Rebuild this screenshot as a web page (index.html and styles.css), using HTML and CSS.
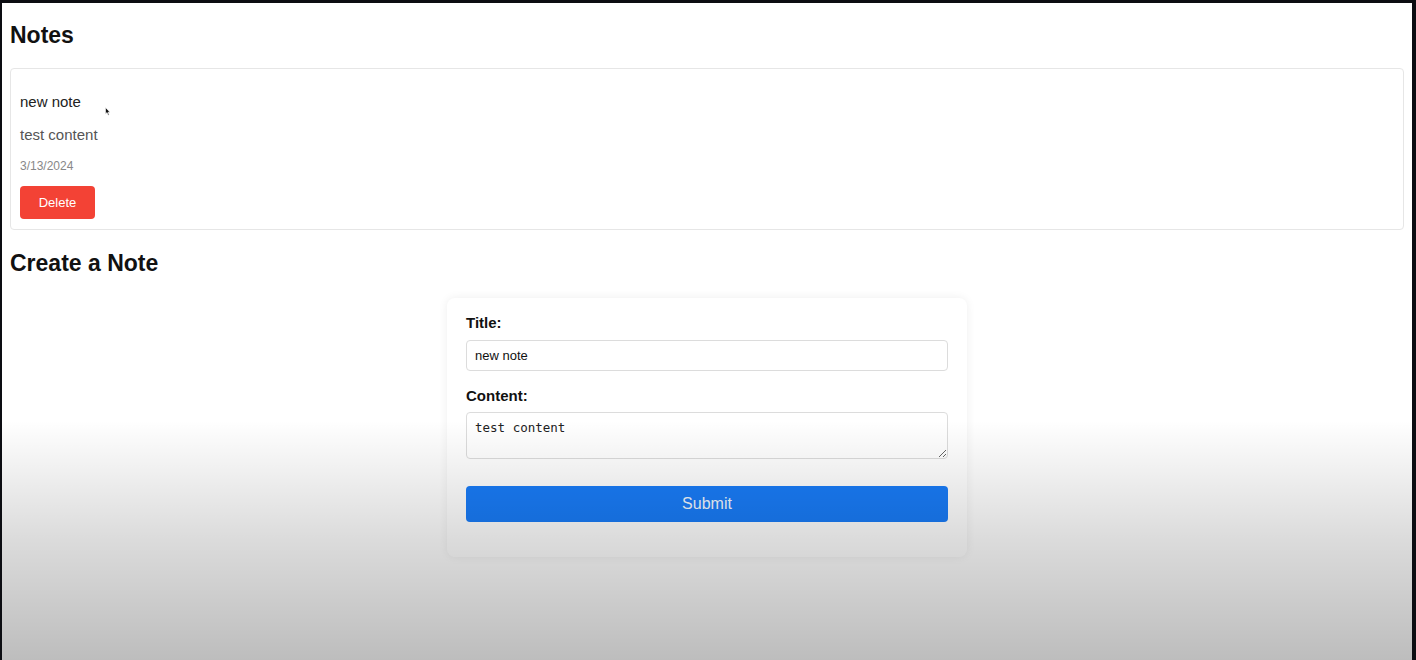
FILE: index.html
```html
<!DOCTYPE html>
<html lang="en">
<head>
<meta charset="utf-8">
<title>Notes</title>
<link rel="stylesheet" href="styles.css">
</head>
<body>
<div class="screen">
  <h2 class="heading heading-notes">Notes</h2>
  <div class="note-card">
    <p class="note-title">new note</p>
    <p class="note-content">test content</p>
    <p class="note-date">3/13/2024</p>
    <button class="btn-delete" type="button">Delete</button>
  </div>
  <h2 class="heading heading-create">Create a Note</h2>
  <form class="note-form">
    <label class="field-label" for="title">Title:</label>
    <input class="field-input" id="title" type="text" value="new note">
    <label class="field-label field-label-second" for="content">Content:</label>
    <textarea class="field-textarea" id="content">test content</textarea>
    <button class="btn-submit" type="button">Submit</button>
  </form>
  <svg class="cursor" width="6" height="9" viewBox="0 0 6 9"><path d="M0.5 0.5 L0.5 7 L2 5.6 L3.2 8.2 L4.2 7.8 L3 5.2 L5 5.2 Z" fill="#111" stroke="#fff" stroke-width="0.6"/></svg>
  <div class="fade"></div>
</div>
</body>
</html>
```

FILE: styles.css
```css
* { box-sizing: border-box; }
html, body { margin: 0; padding: 0; }
body {
  background: #0c0d12;
  font-family: "Liberation Sans", Arial, sans-serif;
  color: #111;
}
.screen {
  position: relative;
  margin: 3px 4px 0 2px;
  height: 657px;
  background: #fff;
  padding: 0 8px;
  overflow: hidden;
}
.heading {
  font-size: 23px;
  line-height: 28px;
  font-weight: bold;
  margin: 0;
  color: #111;
}
.heading-notes { padding-top: 18px; margin-bottom: 19px; }
.heading-create { margin-top: 19px; }
.note-card {
  border: 1px solid #e6e6e6;
  border-radius: 4px;
  padding: 24px 9px 10px;
}
.note-card p { margin: 0; }
.note-title { font-size: 15px; line-height: 18px; color: #222; }
.note-content { font-size: 15px; line-height: 18px; color: #555; margin-top: 15px !important; }
.note-date { font-size: 12px; line-height: 14px; color: #888; margin-top: 15px !important; }
.btn-delete {
  display: block;
  margin-top: 13px;
  width: 75px;
  height: 33px;
  border: none;
  border-radius: 4px;
  background: #f34235;
  color: #fff;
  font-family: "Liberation Sans", Arial, sans-serif;
  font-size: 13px;
  cursor: pointer;
}
.note-form {
  width: 520px;
  margin: 21px auto 0;
  padding: 16px 19px 35px;
  border-radius: 8px;
  box-shadow: 0 0 10px rgba(0,0,0,0.07);
  display: flex;
  flex-direction: column;
  background: #fff;
}
.field-label {
  font-size: 15px;
  line-height: 18px;
  font-weight: bold;
  color: #111;
  margin-bottom: 8px;
}
.field-label-second { margin-top: 16px; margin-bottom: 7px; }
.field-input {
  height: 31px;
  border: 1px solid #dcdcdc;
  border-radius: 4px;
  padding: 0 8px;
  font-family: "Liberation Sans", Arial, sans-serif;
  font-size: 13px;
  color: #111;
}
.field-textarea {
  height: 47px;
  border: 1px solid #dcdcdc;
  border-radius: 4px;
  padding: 7px 8px;
  font-family: "DejaVu Sans Mono", monospace;
  font-size: 12.5px;
  line-height: 15px;
  color: #222;
  resize: vertical;
}
.btn-submit {
  margin-top: 27px;
  height: 36px;
  border: none;
  border-radius: 4px;
  background: #197cf8;
  color: #f2f8ff;
  font-family: "Liberation Sans", Arial, sans-serif;
  font-size: 16px;
}
.cursor { position: absolute; left: 103px; top: 104px; }
.fade {
  position: absolute;
  left: 0; right: 0; top: 417px; bottom: 0;
  pointer-events: none;
  background: linear-gradient(to bottom, rgba(0,0,0,0) 0%, rgba(0,0,0,0.14) 50%, rgba(0,0,0,0.26) 100%);
}
```
